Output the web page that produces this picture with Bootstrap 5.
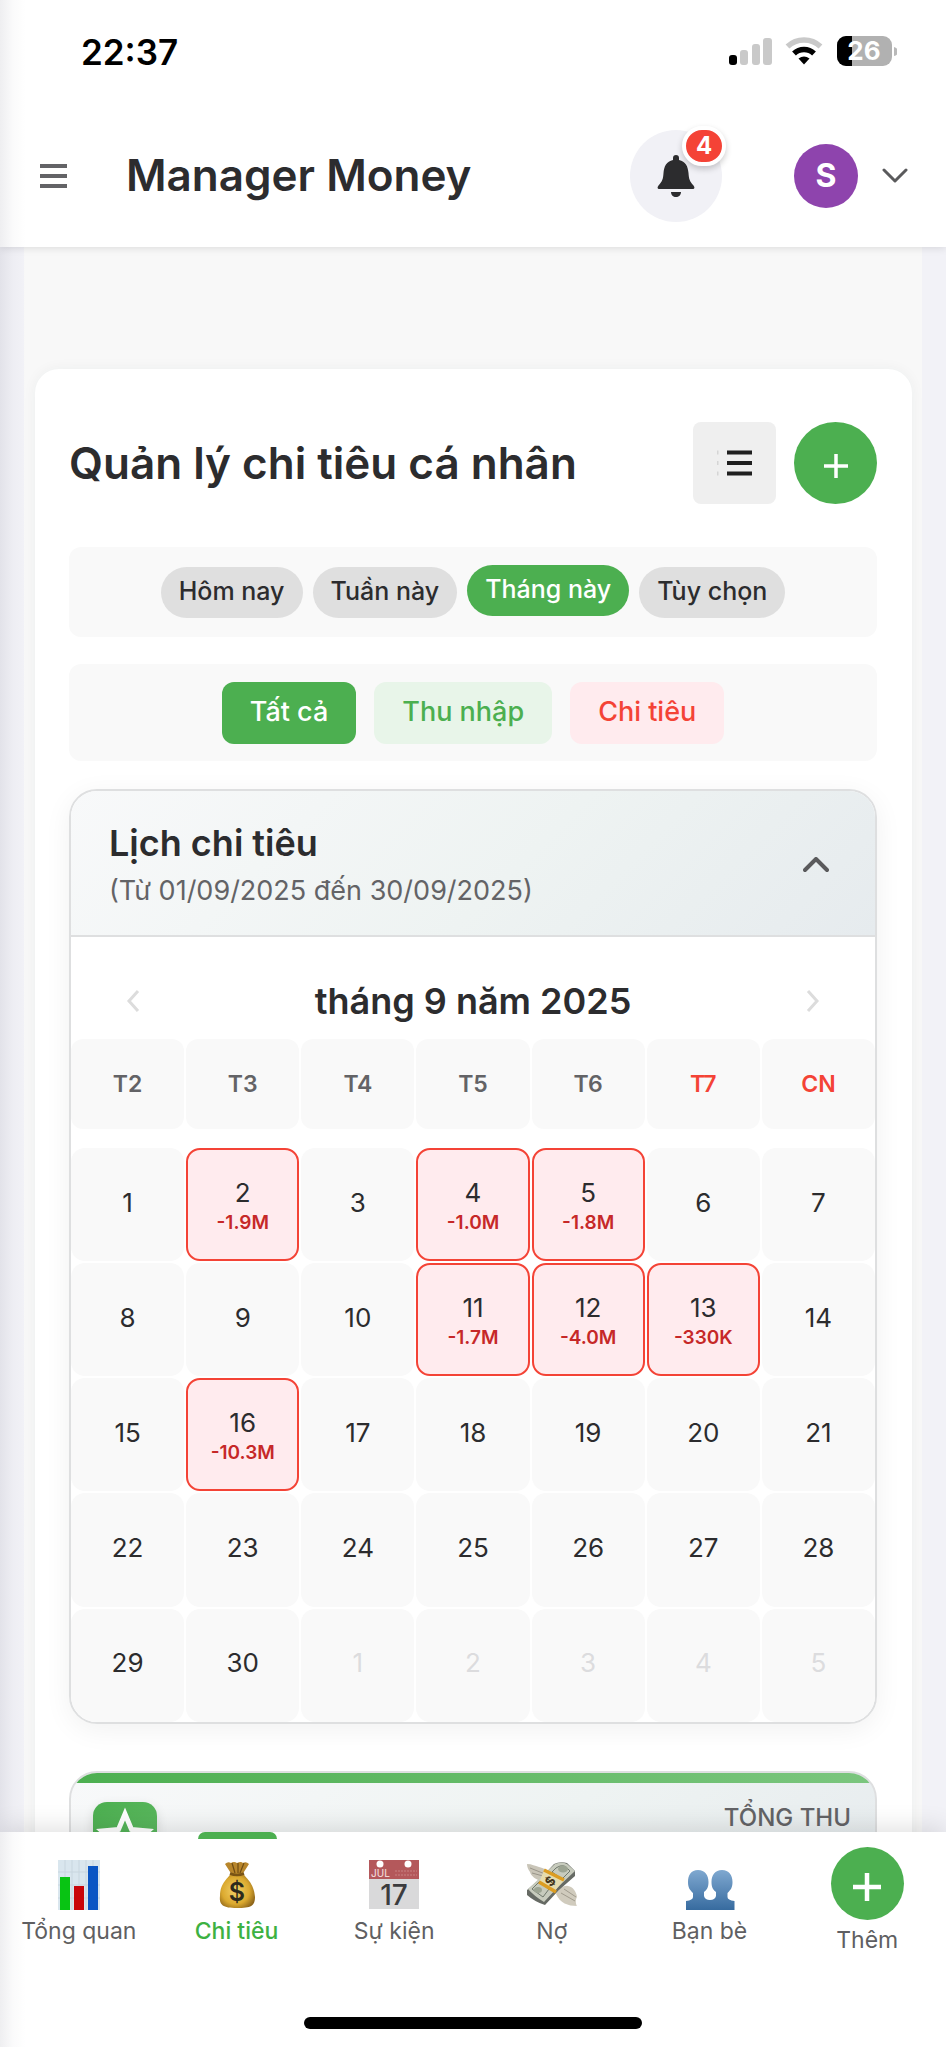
<!DOCTYPE html>
<html lang="vi">
<head>
<meta charset="utf-8">
<meta name="viewport" content="width=device-width, initial-scale=1">
<title>Manager Money</title>
<link href="https://cdn.jsdelivr.net/npm/bootstrap@5.3.0/dist/css/bootstrap.min.css" rel="stylesheet">
<style>
  :root { --green: #4caf50; --red: #f44336; --ink: #2c2c2e; --dim: #636366; --line: #dedfe0; }
  body { font-family: Inter, "Liberation Sans", sans-serif; color: var(--ink); background: #f2f2f7; }
  button { font-family: inherit; color: inherit; border: 0; padding: 0; background: none; }
  svg { display: block; flex: none; }
  .app-shell { height: 100vh; }
  .app-shell::before { content: ""; position: absolute; inset: 0 auto 0 0; width: 26px; z-index: 20; pointer-events: none;
    background: linear-gradient(90deg, rgba(20,20,50,.07), rgba(20,20,50,.02) 50%, rgba(20,20,50,0)); }
  .top-area { background: #fff; box-shadow: 0 1px 8px rgba(0,0,0,.12); z-index: 5; }
  .status-bar { height: 104px; padding: 0 49px 0 81px; }
  .clock { font-size: 35px; font-weight: 600; color: #000; }
  .app-bar { height: 143px; padding: 0 38px 0 40px; }
  .app-name { font-size: 44px; font-weight: 600; margin-left: 59px; }
  .bell { width: 92px; height: 92px; background: #f1f1f6; margin-right: 72px; }
  .bell-count { top: -4px; right: -4px; width: 44px; height: 40px; border: 4px solid #fff; background: var(--red); color: #fff;
    font-size: 24px; font-weight: 700; line-height: 32px; box-shadow: 0 3px 6px rgba(0,0,0,.2); }
  .avatar { width: 64px; height: 64px; background: #8e44ad; color: #fff; font-size: 32px; font-weight: 700; margin-right: 24px; }
  .scroll-area { scrollbar-width: none; padding: 0 24px; }
  .page-bg { background: #f8f8f8; padding: 122px 10px 0 11px; }
  .sheet { background: #fff; border-radius: 24px; padding: 53px 35px 200px 34px; box-shadow: 0 0 14px rgba(30,60,50,.05); }
  .page-title { font-size: 44px; font-weight: 600; }
  .tool-btn { width: 83px; height: 82px; }
  .tool-gap { gap: 18px; }
  .list-btn { background: #efefef; border-radius: 8px; }
  .green-round { background: var(--green); border-radius: 50%; }
  .strip { background: #f9f9f9; border-radius: 12px; }
  .period-strip { margin-top: 43px; height: 90px; gap: 10px; }
  .pill { background: #dfdfdf; border-radius: 26px; height: 51px; padding: 0 18px; font-size: 25px; font-weight: 500; }
  .pill.on { background: var(--green); color: #fff; margin-bottom: 4px; }
  .type-strip { margin-top: 27px; height: 97px; gap: 18px; }
  .type-btn { height: 62px; border-radius: 12px; padding: 0 28px; font-size: 27px; font-weight: 500; }
  .type-all { background: var(--green); color: #fff; }
  .type-in { background: #e8f5e9; color: var(--green); }
  .type-out { background: #ffebee; color: var(--red); }
  .panel { border: 2px solid var(--line); border-radius: 28px; }
  .cal-panel { margin-top: 28px; box-shadow: 0 6px 28px rgba(0,0,0,.06); }
  .tint { background: linear-gradient(135deg, #f8f9fa, #eef3f2 55%, #e6ebee); }
  .cal-head { border-bottom: 2px solid var(--line); padding: 27px 46px 21px 38px; }
  .cal-name { font-size: 36px; font-weight: 600; line-height: 50px; }
  .cal-range { font-size: 27px; line-height: 46px; color: var(--dim); }
  .month-bar { padding: 34px 54px 8px; }
  .month-name { font-size: 36px; font-weight: 600; line-height: 60px; }
  .week-grid { display: grid; grid-template-columns: repeat(7, minmax(0, 1fr)); gap: 2px; }
  .wd { height: 90px; background: #f9f9f9; border-radius: 12px; font-size: 23px; font-weight: 600; color: var(--dim); }
  .wd.off { color: var(--red); }
  .days { margin-top: 19px; }
  .dy { aspect-ratio: 1; background: #f9f9f9; border-radius: 14px; font-size: 26px; font-weight: 400; line-height: 32px; padding-bottom: 4px;
    display: flex; flex-direction: column; align-items: center; justify-content: center; }
  .dy.spent { background: #ffebee; border: 2px solid var(--red); padding: 4px 0 0; }
  .dy.spent span { font-size: 19px; font-weight: 600; line-height: 28px; color: #c62828; }
  .dy.next { color: #dcdcde; }
  .sum-card { margin-top: 47px; height: 180px; }
  .sum-line { height: 10px; background: linear-gradient(90deg, #4caf50, #7bc67e); }
  .sum-body { padding: 19px 24px 0 22px; }
  .sum-icon { width: 64px; height: 64px; border-radius: 14px; background: linear-gradient(135deg, #4caf50, #5fba63); box-shadow: 0 4px 12px rgba(0,0,0,.12); }
  .sum-label { font-size: 24px; font-weight: 500; color: var(--dim); line-height: 32px; }
  .tab-bar { background: #fff; height: 215px; box-shadow: 0 -4px 24px rgba(0,0,0,.12); z-index: 5; }
  .tab-link { flex: 1 1 0; min-width: 0; color: #5f5f62; font-size: 23px; line-height: 32px; text-decoration: none; padding-top: 28px; }
  .tab-link svg { margin-bottom: 5px; }
  .tab-link.on { color: #3db142; font-weight: 500; }
  .tab-link.on::before { content: ""; position: absolute; top: 0; left: 50%; width: 79px; height: 7px; margin-left: -39px;
    background: var(--green); border-radius: 8px 8px 0 0; }
  .tab-add { padding-top: 15px; }
  .tab-add .green-round { width: 73px; height: 73px; margin-bottom: 4px; }
  .home-line { width: 338px; height: 12px; background: #000; border-radius: 6px; margin: 0 auto 18px; }
</style>
</head>
<body>
<div class="app-shell d-flex flex-column position-relative overflow-hidden">

  <header class="top-area position-relative flex-shrink-0">
    <div class="status-bar d-flex align-items-center justify-content-between">
      <span class="clock">22:37</span>
      <svg width="168" height="32" viewBox="0 0 168 32" aria-hidden="true">
        <rect x="0" y="19" width="8" height="10" rx="3" fill="#000"/>
        <g fill="#c9c9c9"><rect x="11" y="14" width="8" height="15" rx="3"/><rect x="23" y="8" width="8" height="21" rx="3"/><rect x="34" y="2" width="9" height="27" rx="3"/></g>
        <g fill="none" stroke-width="5.5"><path d="M58.5 10.500a24 24 0 0 1 33 0" stroke="#c9c9c9"/><path d="M65 17.500a14.500 14.500 0 0 1 20 0" stroke="#000"/></g>
        <path d="M69.500 22.500q5.500-4 11 0L75 28.500z" fill="#000"/>
        <path d="M117 0h37a9 9 0 0 1 9 9v12a9 9 0 0 1-9 9h-37a9 9 0 0 1-9-9V9a9 9 0 0 1 9-9z" fill="#b1b1b1"/>
        <path d="M123 0h-6a9 9 0 0 0-9 9v12a9 9 0 0 0 9 9h6z" fill="#000"/>
        <path d="M165 11v9q4-1 4-4.500T165 11z" fill="#b9b9b9"/>
        <text x="135" y="24" text-anchor="middle" font-family="Inter, sans-serif" font-size="26" font-weight="700" fill="#fff">26</text>
      </svg>
    </div>
    <div class="app-bar d-flex align-items-center">
      <button type="button" aria-label="Menu"><svg width="27" height="26" viewBox="0 0 27 26" stroke="#636366" stroke-width="4"><path d="M0 3h27M0 13h27M0 23h27"/></svg></button>
      <h1 class="app-name mb-0 me-auto">Manager Money</h1>
      <button type="button" class="bell rounded-circle position-relative d-flex align-items-center justify-content-center" aria-label="Thông báo">
        <svg width="38" height="44" viewBox="0 0 38 44" fill="#2c2c2e"><path d="M19 1c-2 0-3 1.300-3 3v2C9.500 7.300 7 12.500 6.500 19c-.4 6-1 8-5 12.500C-.3 34 .8 35 2.500 35h33c1.700 0 2.800-1 1-3.500-4-4.500-4.600-6.500-5-12.500C31 12.500 28.500 7.300 22 6V4c0-1.700-1-3-3-3zM14 38h10c0 3-2.200 5-5 5s-5-2-5-5z"/></svg>
        <span class="bell-count position-absolute rounded-pill">4</span>
      </button>
      <button type="button" class="d-flex align-items-center" aria-label="Tài khoản">
        <span class="avatar rounded-circle d-flex align-items-center justify-content-center">S</span>
        <svg width="26" height="16" viewBox="0 0 26 16" fill="none" stroke="#5a5a5c" stroke-width="3" stroke-linecap="round" stroke-linejoin="round"><path d="M2 2l11 11L24 2"/></svg>
      </button>
    </div>
  </header>

  <main class="scroll-area flex-grow-1 overflow-auto">
    <div class="page-bg">
      <section class="sheet">
        <div class="d-flex align-items-center tool-gap">
          <h2 class="page-title mb-0 me-auto">Quản lý chi tiêu cá nhân</h2>
          <button type="button" class="tool-btn list-btn d-flex align-items-center justify-content-center" aria-label="Danh sách">
            <svg width="36" height="28" viewBox="0 0 36 28"><path d="M10 3.500h25M10 14h25M10 24.500h25" stroke="#1f1f1f" stroke-width="4"/><path d="M0 3.500h1.500M0 14h1.500M0 24.500h1.500" stroke="#d5d5d5" stroke-width="4"/></svg>
          </button>
          <button type="button" class="tool-btn green-round d-flex align-items-center justify-content-center" aria-label="Thêm chi tiêu">
            <svg width="26" height="32" viewBox="0 0 26 32" stroke="#fff" stroke-width="3.500"><path d="M13 7v24M1 19h24"/></svg>
          </button>
        </div>

        <div class="strip period-strip d-flex align-items-center justify-content-center">
          <button type="button" class="pill">Hôm nay</button>
          <button type="button" class="pill">Tuần này</button>
          <button type="button" class="pill on">Tháng này</button>
          <button type="button" class="pill">Tùy chọn</button>
        </div>
        <div class="strip type-strip d-flex align-items-center justify-content-center">
          <button type="button" class="type-btn type-all">Tất cả</button>
          <button type="button" class="type-btn type-in">Thu nhập</button>
          <button type="button" class="type-btn type-out">Chi tiêu</button>
        </div>

        <section class="panel cal-panel overflow-hidden">
          <div class="cal-head tint d-flex align-items-center justify-content-between">
            <div>
              <h3 class="cal-name mb-0">Lịch chi tiêu</h3>
              <div class="cal-range">(Từ 01/09/2025 đến 30/09/2025)</div>
            </div>
            <button type="button" aria-label="Thu gọn"><svg width="26" height="19" viewBox="0 0 26 19" fill="none" stroke="#5a5a5c" stroke-width="4" stroke-linecap="round" stroke-linejoin="round"><path d="M2 13L13 2l11 11"/></svg></button>
          </div>
          <div class="month-bar d-flex align-items-center justify-content-between">
            <button type="button" aria-label="Tháng trước"><svg width="15" height="22" viewBox="0 0 15 22" fill="none" stroke="#dcdcdc" stroke-width="3"><path d="M13 1L4 11l9 10"/></svg></button>
            <h4 class="month-name mb-0">tháng 9 năm 2025</h4>
            <button type="button" aria-label="Tháng sau"><svg width="15" height="22" viewBox="0 0 15 22" fill="none" stroke="#dcdcdc" stroke-width="3"><path d="M2 1l9 10-9 10"/></svg></button>
          </div>
          <div class="week-grid text-center">
            <div class="wd d-flex align-items-center justify-content-center">T2</div>
            <div class="wd d-flex align-items-center justify-content-center">T3</div>
            <div class="wd d-flex align-items-center justify-content-center">T4</div>
            <div class="wd d-flex align-items-center justify-content-center">T5</div>
            <div class="wd d-flex align-items-center justify-content-center">T6</div>
            <div class="wd off d-flex align-items-center justify-content-center">T7</div>
            <div class="wd off d-flex align-items-center justify-content-center">CN</div>
          </div>
          <div class="week-grid days">
            <button type="button" class="dy">1</button>
            <button type="button" class="dy spent">2<span>-1.9M</span></button>
            <button type="button" class="dy">3</button>
            <button type="button" class="dy spent">4<span>-1.0M</span></button>
            <button type="button" class="dy spent">5<span>-1.8M</span></button>
            <button type="button" class="dy">6</button>
            <button type="button" class="dy">7</button>
            <button type="button" class="dy">8</button>
            <button type="button" class="dy">9</button>
            <button type="button" class="dy">10</button>
            <button type="button" class="dy spent">11<span>-1.7M</span></button>
            <button type="button" class="dy spent">12<span>-4.0M</span></button>
            <button type="button" class="dy spent">13<span>-330K</span></button>
            <button type="button" class="dy">14</button>
            <button type="button" class="dy">15</button>
            <button type="button" class="dy spent">16<span>-10.3M</span></button>
            <button type="button" class="dy">17</button>
            <button type="button" class="dy">18</button>
            <button type="button" class="dy">19</button>
            <button type="button" class="dy">20</button>
            <button type="button" class="dy">21</button>
            <button type="button" class="dy">22</button>
            <button type="button" class="dy">23</button>
            <button type="button" class="dy">24</button>
            <button type="button" class="dy">25</button>
            <button type="button" class="dy">26</button>
            <button type="button" class="dy">27</button>
            <button type="button" class="dy">28</button>
            <button type="button" class="dy">29</button>
            <button type="button" class="dy">30</button>
            <button type="button" class="dy next">1</button>
            <button type="button" class="dy next">2</button>
            <button type="button" class="dy next">3</button>
            <button type="button" class="dy next">4</button>
            <button type="button" class="dy next">5</button>
          </div>
        </section>

        <section class="panel sum-card tint overflow-hidden">
          <div class="sum-line"></div>
          <div class="sum-body d-flex justify-content-between">
            <div class="sum-icon d-flex align-items-center justify-content-center">
              <svg width="58" height="56" viewBox="0 0 58 56" fill="none" stroke="#fff" stroke-width="5"><path d="M29 8l6.500 15.500L52 25 39.500 36l4 16.500L29 44l-14.500 8.500 4-16.500L6 25l16.500-1.500z"/></svg>
            </div>
            <div class="sum-label">TỔNG THU</div>
          </div>
        </section>
      </section>
    </div>
  </main>

  <nav class="tab-bar position-relative flex-shrink-0 d-flex flex-column justify-content-between">
    <div class="d-flex">
      <a href="#" class="tab-link d-flex flex-column align-items-center">
        <svg width="50" height="50" viewBox="0 0 50 50"><path d="M4 0h42v50H4z" fill="#d9e6ee"/><path d="M11 0v50M18 0v50M25 0v50M32 0v50M39 0v50M4 12h42M4 25h42M4 38h42" stroke="#c8d6df"/><path d="M6 17h10v33H6z" fill="#08c413"/><path d="M20 26h10v24H20z" fill="#c90509"/><path d="M34 6h10v44H34z" fill="#0a56c4"/></svg>
        Tổng quan
      </a>
      <a href="#" class="tab-link on position-relative d-flex flex-column align-items-center" aria-current="page">
        <svg width="50" height="50" viewBox="0 0 50 50">
          <defs><radialGradient id="bagFill" cx=".45" cy=".5" r=".6"><stop offset="0" stop-color="#f4d268"/><stop offset=".65" stop-color="#dba92f"/><stop offset="1" stop-color="#8f661b"/></radialGradient></defs>
          <path d="M13 4q3-3 6-1 3-2 6 0 4-2 6 0 3-2 6 1l-7 11H20z" fill="#b8862b"/><path d="M20 3l3 10M26 3v10M32 3l-4 10" stroke="#6f4c12" stroke-width="1.200"/>
          <path d="M19 13h12c2 5 11 9 12 24 0 9-4 11-18 11S7 45 8 36c0-14 9-18 11-23z" fill="url(#bagFill)"/><path d="M18 13.500q7 3 14 0" stroke="#7a5415" stroke-width="2.500" fill="none"/>
          <text x="25" y="41" text-anchor="middle" font-family="Inter, sans-serif" font-size="25" font-weight="600" fill="#2d2a1c">$</text>
        </svg>
        Chi tiêu
      </a>
      <a href="#" class="tab-link d-flex flex-column align-items-center">
        <svg width="50" height="50" viewBox="0 0 50 50"><path d="M0 0h50v49H0z" fill="#d9d9da"/><path d="M0 0h50v19H0z" fill="#b4585b"/><circle cx="11" cy="4" r="3.500" fill="#fff"/><circle cx="39" cy="4" r="3.500" fill="#fff"/><path d="M26 11h22M26 15h22" stroke="#c98284" stroke-dasharray="2 1"/>
          <text x="2" y="17" font-family="Inter, sans-serif" font-size="10" font-weight="500" fill="#efd4d4">JUL</text>
          <text x="25" y="45" text-anchor="middle" font-family="Inter, sans-serif" font-size="28" font-weight="500" fill="#3c3c3e">17</text></svg>
        Sự kiện
      </a>
      <a href="#" class="tab-link d-flex flex-column align-items-center">
        <svg width="50" height="50" viewBox="0 0 50 50">
          <path d="M0 4c5 0 8 2 12 3 5 1 7 3 9 6l-6 8C9 20 4 16 3 12 1 9 0 7 0 4z" fill="#c9c5b8"/><path d="M3 8l15 6M5 13l11 3" stroke="#99958a"/>
          <path d="M29 34c4-6 8-9 12-8 5 1 8 5 9 11-2 3-1 8 0 9-9 0-17-3-21-12z" fill="#d0cbbd"/><path d="M34 33l14 8M37 29l12 8" stroke="#a09b8e"/>
          <path d="M0 30L14 18 27 4Q33 1 40 3l8 8v5L32 30 18 45Q8 42 0 35z" fill="#666a64"/>
          <path d="M1 29L14 17 28 4q7-3 12 0l8 7-17 16-14 15Q7 36 1 29z" fill="#c7cbbd"/>
          <path d="M5 29l8-8 9 8-6 8zM29 8q6-4 10-1l4 4-8 8-10-7z" fill="none" stroke="#6f786c"/><ellipse cx="36" cy="9" rx="5" ry="3.500" fill="#9ca492"/><ellipse cx="11" cy="30" rx="4" ry="3" fill="#9ca492"/>
          <path d="M17 10l20 10-10 12-15-9z" fill="#e5dcae"/><path d="M17 10l20 10M12 22l17 10" stroke="#dc9d22" stroke-width="3.500"/>
          <text x="23" y="26" text-anchor="middle" transform="rotate(-50 23 21)" font-family="Inter, sans-serif" font-size="13" font-weight="700" fill="#43351b">$</text>
        </svg>
        Nợ
      </a>
      <a href="#" class="tab-link d-flex flex-column align-items-center">
        <svg width="50" height="50" viewBox="0 0 50 50"><defs><linearGradient id="bust" x1="0" y1="0" x2="0" y2="1"><stop offset="0" stop-color="#7fa8d0"/><stop offset="1" stop-color="#376b9f"/></linearGradient></defs>
          <path fill="url(#bust)" d="M13 10c7 0 10.500 5 10.500 12 0 6-2 8-4.500 10v4q1 4 6 4t6-4v-4c-2.500-2-4.500-4-4.500-10 0-7 3.500-12 10.500-12s10.500 5 10.500 12c0 6-2 8-5 11v4q0 3 7 4v9H1v-9q7-1 7-4v-4c-3-3-5-5-5-11 0-7 3-12 10-12z"/></svg>
        Bạn bè
      </a>
      <a href="#" class="tab-link tab-add d-flex flex-column align-items-center">
        <span class="green-round d-flex align-items-center justify-content-center"><svg class="mb-0" width="28" height="34" viewBox="0 0 28 34" stroke="#fff" stroke-width="4.500"><path d="M14 6v28M0 20h28"/></svg></span>
        Thêm
      </a>
    </div>
    <div class="home-line"></div>
  </nav>
</div>
<script src="https://cdn.jsdelivr.net/npm/bootstrap@5.3.0/dist/js/bootstrap.bundle.min.js"></script>
</body>
</html>
